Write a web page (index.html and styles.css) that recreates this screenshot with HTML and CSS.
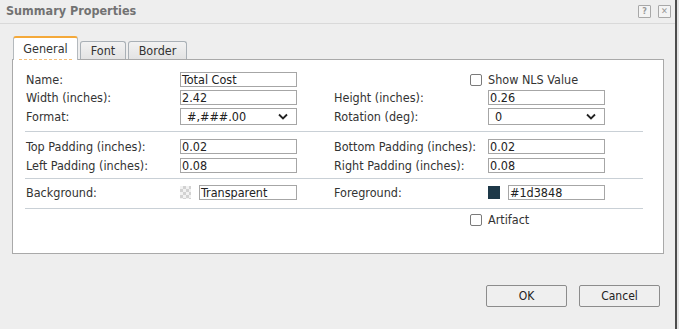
FILE: index.html
```html
<!DOCTYPE html>
<html lang="en">
<head>
<meta charset="UTF-8" />
<title>Summary Properties</title>
<link rel="stylesheet" href="styles.css">
</head>
<body>
<div class="dialog">
  <div class="titlebar">
    <span class="title">Summary Properties</span>
    <span class="tools">
      <span class="tool">?</span>
      <span class="tool">&#x2715;</span>
    </span>
  </div>

  <!-- Tabs -->
  <div class="tabs">
    <div class="tab active"><span class="tab-label">General</span></div>
    <div class="tab">Font</div>
    <div class="tab">Border</div>
  </div>

  <div class="panel">
    <div class="grid first">
      <label>Name:</label>
      <span class="field">Total Cost</span>
      <span></span>
      <span></span>
      <span class="check"><span class="box"></span>Show NLS Value</span>

      <label>Width (inches):</label>
      <span class="field">2.42</span>
      <span></span>
      <label>Height (inches):</label>
      <span class="field">0.26</span>

      <label>Format:</label>
      <span class="field select">#,###.00<svg width="10" height="7" viewBox="0 0 10 7"><path d="M1 1.5 L5 5.5 L9 1.5" fill="none" stroke="#222" stroke-width="1.8"/></svg></span>
      <span></span>
      <label>Rotation (deg):</label>
      <span class="field select">0<svg width="10" height="7" viewBox="0 0 10 7"><path d="M1 1.5 L5 5.5 L9 1.5" fill="none" stroke="#222" stroke-width="1.8"/></svg></span>
    </div>

    <div class="sep sep1"></div>

    <div class="grid padding">
      <label>Top Padding (inches):</label>
      <span class="field">0.02</span>
      <span></span>
      <label>Bottom Padding (inches):</label>
      <span class="field">0.02</span>

      <label>Left Padding (inches):</label>
      <span class="field">0.08</span>
      <span></span>
      <label>Right Padding (inches):</label>
      <span class="field">0.08</span>
    </div>

    <div class="sep sep2"></div>

    <div class="grid colors">
      <label>Background:</label>
      <span class="color"><span class="swatch checker"></span><span class="field">Transparent</span></span>
      <span></span>
      <label>Foreground:</label>
      <span class="color"><span class="swatch fg"></span><span class="field">#1d3848</span></span>
    </div>

    <div class="sep sep3"></div>

    <div class="grid artifact">
      <span></span>
      <span></span>
      <span></span>
      <span></span>
      <span class="check"><span class="box"></span>Artifact</span>
    </div>
  </div>

  <div class="buttons">
    <button class="btn">OK</button>
    <button class="btn">Cancel</button>
  </div>
</div>
</body>
</html>
```

FILE: styles.css
```css
body {
  margin: 0;
  background: #e4e4e4;
  font-family: "DejaVu Sans Condensed", "DejaVu Sans", sans-serif;
  font-size: 12.5px;
  color: #333;
}

.dialog {
  width: 675px;
  height: 329px;
  background: #eeeeee;
  border-right: 2px solid #4d4d4d;
}

/* Title bar */
.titlebar {
  height: 23px;
  border-bottom: 1px solid #d9d9d9;
  display: flex;
  align-items: center;
  justify-content: space-between;
  padding: 0 4px 0 6px;
}
.title {
  font-weight: bold;
  font-size: 12.5px;
  color: #727272;
  margin-top: -3px;
}
.tools {
  display: flex;
  gap: 7px;
  margin-top: -1px;
}
.tool {
  width: 11px;
  height: 11px;
  border: 1px solid #a8a8a8;
  border-radius: 1px;
  color: #9a9a9a;
  font-size: 9px;
  font-weight: bold;
  line-height: 11px;
  text-align: center;
  background: #f4f4f4;
}

/* Tabs */
.tabs {
  display: flex;
  align-items: flex-end;
  gap: 2px;
  margin: 12px 0 0 13px;
  height: 23px;
  position: relative;
  z-index: 1;
}
.tab {
  height: 17px;
  line-height: 17px;
  border: 1px solid #a9b0b6;
  border-bottom: none;
  border-radius: 3px 3px 0 0;
  background: linear-gradient(#f2f2f2, #e3e3e3);
  color: #333;
  font-size: 12.5px;
  text-align: center;
}
.tab:nth-child(2) { width: 44px; }
.tab:nth-child(3) { width: 57px; }
.tab.active {
  width: 63px;
  height: 22px;
  line-height: 21px;
  background: #fff;
  border-top: 2px solid #f4a93a;
  border-color: #f4a93a #b4b9bd #fff #b4b9bd;
  margin-bottom: -1px;
}
.tab-label {
  display: inline-block;
  line-height: 16px;
  padding: 0 4px 2px;
  border-bottom: 1px dashed #f6c07a;
}

/* Panel */
.panel {
  box-sizing: border-box;
  margin-left: 12px;
  width: 652px;
  height: 195px;
  background: #fff;
  border: 1px solid #a9a9a9;
  padding: 0 20px 0 13px;
}

.grid {
  display: grid;
  grid-template-columns: 154px 117px 37px 154px 117px;
  align-items: center;
}
.grid.first {
  margin-top: 12px;
  grid-template-rows: 15px 15px 17px;
  row-gap: 3px;
}
.grid.padding {
  margin-top: 7px;
  grid-template-rows: 15px 15px;
  row-gap: 4px;
}
.grid.colors {
  margin-top: 6px;
  grid-template-rows: 15px;
}
.grid.artifact {
  margin-top: 4px;
  grid-template-rows: 13px;
}

label {
  white-space: nowrap;
}

.field {
  box-sizing: border-box;
  height: 15px;
  border: 1px solid #a6a6a6;
  background: #fff;
  line-height: 13px;
  padding: 0 1px;
  color: #222;
  white-space: nowrap;
  overflow: hidden;
}
.field.select {
  height: 17px;
  line-height: 15px;
  padding: 0 8px 0 6px;
  display: flex;
  align-items: center;
  justify-content: space-between;
}

.check {
  display: flex;
  align-items: center;
  gap: 6px;
  margin-left: -18px;
  white-space: nowrap;
}
.box {
  box-sizing: border-box;
  width: 12px;
  height: 12px;
  border: 1px solid #7a7a7a;
  border-radius: 2px;
  background: #fff;
}

.color {
  display: flex;
  align-items: center;
  gap: 8px;
}
.color .field {
  flex: 1;
}
.swatch {
  width: 11px;
  height: 13px;
  flex: none;
}
.swatch.checker {
  background: repeating-conic-gradient(#d2d2d2 0 25%, #f2f2f2 0 50%) 0 0 / 6px 6px;
}
.swatch.fg {
  width: 12px;
  background: #1d3848;
}

/* Separators */
.sep {
  margin-left: -1px;
  border-top: 1px solid #c9d0d6;
}
.sep1 { margin-top: 6px; }
.sep2 { margin-top: 5px; }
.sep3 { margin-top: 8px; }

/* Buttons */
.buttons {
  display: flex;
  justify-content: flex-end;
  gap: 12px;
  margin-top: 31px;
  padding-right: 15px;
}
.btn {
  width: 81px;
  height: 22px;
  border: 1px solid #8c8c8c;
  border-radius: 2px;
  background: #efefef;
  font-family: inherit;
  font-size: 12px;
  color: #222;
  padding: 0;
}
```
